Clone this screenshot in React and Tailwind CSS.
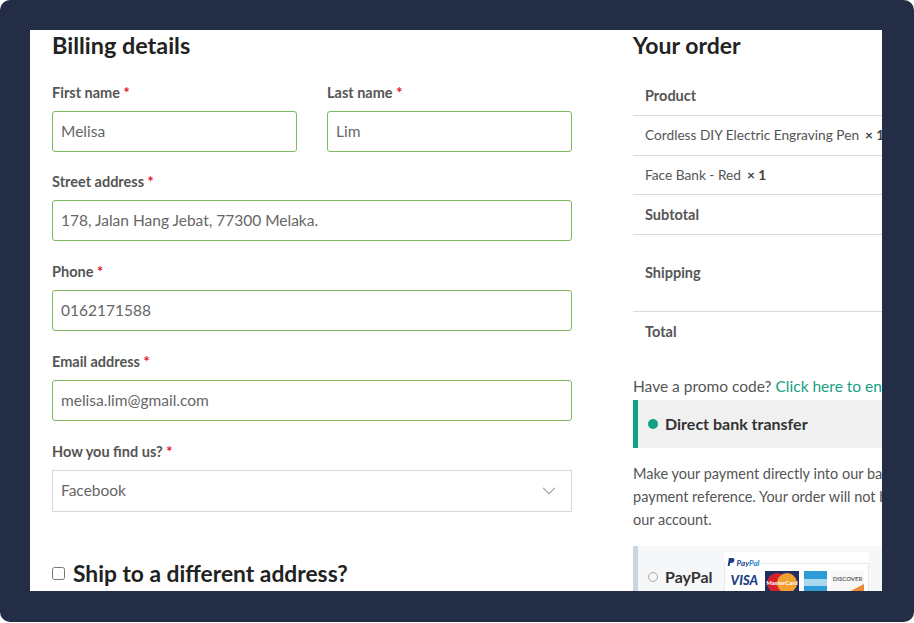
import React from 'react';
import { ChevronDown } from 'lucide-react';

const Label = ({ children }) => (
  <label className="block h-5 mb-2 text-[14.5px] leading-5 font-bold text-[#555]">
    {children} <span className="text-[#e2142d]">*</span>
  </label>
);

const Field = ({ label, value, className = 'mb-[21px]' }) => (
  <div className={`${className} flex-1`}>
    <Label>{label}</Label>
    <div className="h-[41px] flex items-center px-2 border border-[#7fb95f] rounded-[3px] text-[15.5px] text-[#666]">
      {value}
    </div>
  </div>
);

const Row = ({ children, className = 'h-[39px]', bold }) => (
  <div className={`${className} flex items-center px-3 border-b border-[#d5dbe1] whitespace-nowrap text-[#555] ${bold ? 'font-bold text-[14.5px]' : 'text-[13.7px]'}`}>
    {children}
  </div>
);

const Qty = () => <b className="ml-1.5 text-[#444]">× 1</b>;

const Cards = () => (
  <div className="ml-[11px] mt-[6px] w-[145px] h-[60px] bg-white pt-[6px] shrink-0 self-start">
    <div className="relative flex items-center gap-[2px] h-[10px] w-fit ml-[3px] pr-[2px] bg-white italic font-bold text-[8px] text-[#1b86c9]">
      <svg width="8" height="10" viewBox="0 0 9 12">
        <path d="M2 0h4c2 0 3 1 2.600 3C8.200 5 7 6 5 6H3.400L2.800 9.500H.5z" fill="#1d3f85" />
      </svg>
      <span><span className="text-[#1d3f85]">Pay</span>Pal</span>
    </div>
    <div className="-mt-[5px] border border-[#e6e8ea] h-[40px] pl-[6px] pt-[7px] flex items-start">
      <span className="w-[27px] mt-[1px] text-[13px] leading-[16px] italic font-black text-[#1d3f85]">VISA</span>
      <svg className="ml-[7px]" width="34" height="24" viewBox="0 0 34 24">
        <rect width="34" height="24" fill="#1f2f63" />
        <circle cx="12" cy="12" r="10" fill="#d3222e" />
        <circle cx="22" cy="12" r="10" fill="#f0a030" />
        <text x="17" y="14" textAnchor="middle" fontSize="6" fontWeight="700" fill="#fff">MasterCard</text>
      </svg>
      <svg className="ml-[5px]" width="23" height="24" viewBox="0 0 23 24">
        <rect width="23" height="24" fill="#2f9bd6" />
        <rect y="8" width="23" height="7" fill="#a9d8ef" />
      </svg>
      <svg className="ml-[4px]" width="33" height="24" viewBox="0 0 33 24">
        <rect width="33" height="24" fill="#f7f7f7" />
        <text x="16.500" y="10" textAnchor="middle" fontSize="6" fontWeight="700" fill="#666">DISCOVER</text>
        <path d="M33 13v11H12z" fill="#ed8a3a" />
      </svg>
    </div>
  </div>
);

export default function App() {
  return (
    <div className="w-[914px] h-[623px] bg-white overflow-hidden font-['Lato','Noto_Sans',sans-serif]">
      <div className="h-[622px] bg-[#232d45] rounded-[10px] pl-[30px] pr-[32px] pt-[30px] pb-[31px]">
        <div className="h-full bg-white flex overflow-hidden">
          <div className="w-[520px] ml-[22px] shrink-0">
            <h2 className="h-8 mb-[21px] text-[23.4px] leading-[30px] font-bold text-[#222]">Billing details</h2>
            <div className="flex gap-[30px]">
              <Field label="First name" value="Melisa" className="mb-5" />
              <Field label="Last name" value="Lim" className="mb-5" />
            </div>
            <Field label="Street address" value="178, Jalan Hang Jebat, 77300 Melaka." />
            <Field label="Phone" value="0162171588" />
            <Field label="Email address" value="melisa.lim@gmail.com" />
            <Label>How you find us?</Label>
            <div className="h-[42px] flex items-center justify-between pl-2 pr-[11px] border border-[#d3d9df] text-[15.5px] text-[#666]">
              Facebook
              <ChevronDown size={22} strokeWidth={1.4} className="text-[#aaa]" />
            </div>
            <div className="mt-[46px] flex items-center gap-2">
              <input type="checkbox" className="w-[13px] h-[13px]" readOnly />
              <span className="text-[22.8px] leading-[30px] font-bold text-[#222]">Ship to a different address?</span>
            </div>
          </div>

          <div className="w-[500px] ml-[61px] shrink-0">
            <h2 className="h-8 mb-[4px] text-[23px] leading-[30px] font-bold text-[#222]">Your order</h2>
            <Row className="h-[50px] pt-[10px]" bold>Product</Row>
            <Row className="h-[40px]">Cordless DIY Electric Engraving Pen <Qty /></Row>
            <Row>Face Bank - Red <Qty /></Row>
            <Row className="h-[40px]" bold>Subtotal</Row>
            <Row className="h-[77px]" bold>Shipping</Row>
            <div className="h-[39px] flex items-center px-3 text-[14.5px] font-bold text-[#555]">Total</div>
            <p className="mt-[25px] h-[20px] text-[15.5px] leading-5 text-[#555] whitespace-nowrap">
              Have a promo code? <a className="text-[#16a085]">Click here to enter your code</a>
            </p>
            <div className="mt-[4px] h-[48px] bg-[#f0f0f0] border-l-[5px] border-[#12a086] flex items-center pl-[10px] text-[16px] font-bold text-[#333]">
              <span className="w-[10px] h-[10px] rounded-full bg-[#12a086] mr-[7px]"></span>
              Direct bank transfer
            </div>
            <p className="mt-[14px] text-[14.5px] leading-[23px] text-[#555] whitespace-nowrap">
              Make your payment directly into our bank account. Please use your Order ID as the<br />
              payment reference. Your order will not be shipped until the funds have cleared in<br />
              our account.
            </p>
            <div className="mt-[15px] h-[62px] bg-[#f6f7f8] border-l-[5px] border-[#cdd6e0] flex items-center pl-[10px] text-[16px] font-bold text-[#333]">
              <span className="w-[10px] h-[10px] rounded-full border border-[#aaa] mr-[7px]"></span>
              <span>PayPal</span>
              <Cards />
            </div>
          </div>
        </div>
      </div>
    </div>
  );
}
